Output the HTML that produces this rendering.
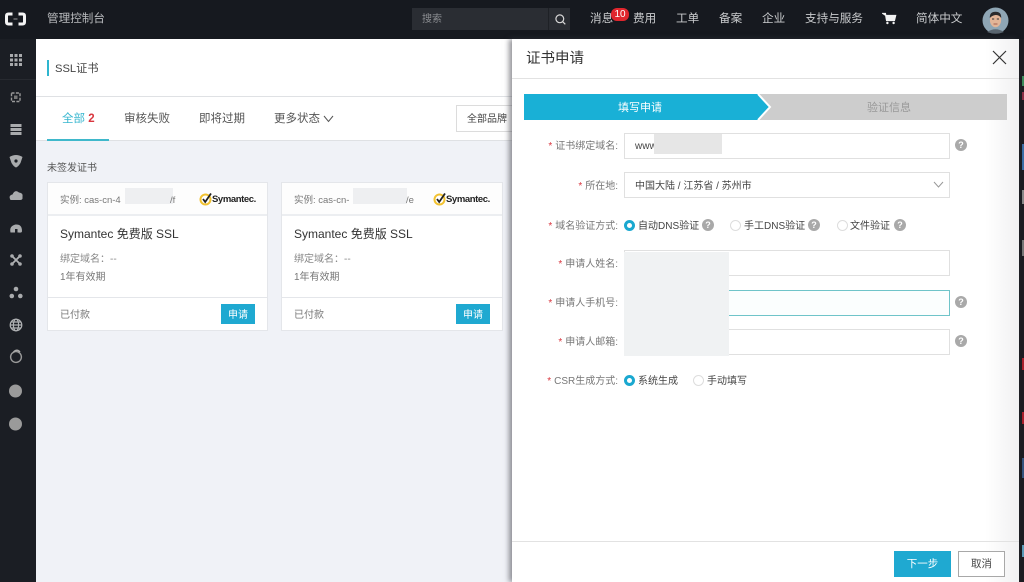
<!DOCTYPE html>
<html lang="zh"><head><meta charset="utf-8"><title>证书申请</title>
<style>
*{box-sizing:border-box}
html,body{margin:0;padding:0;width:1024px;height:582px;overflow:hidden;background:#f0f2f7}
body{font-family:"Liberation Sans","Noto Sans CJK SC",sans-serif;position:relative;color:#333;filter:blur(.3px)}
.a{position:absolute;white-space:nowrap}
.nav{top:11px;font-size:11.6px;line-height:16px;color:#c9cbcd}
.card{position:absolute;top:182px;width:221px;height:149px;background:#fff;border:1px solid #e4e6ea}
.card .h{position:absolute;left:0;top:0;right:0;height:33px;border-bottom:2px solid #eceef1;background:#fdfdfd}
.lab{position:absolute;font-size:10px;color:#777;line-height:14px;white-space:nowrap;right:406px}
.lab b{color:#d9363e;font-weight:400;margin-right:3px}
.inp{position:absolute;left:624px;width:326px;height:26px;background:#fff;border:1px solid #e0e0e0}
.q{position:absolute;width:12px;height:12px;border-radius:50%;background:#a9a9a9;color:#fff;font-size:9px;line-height:12px;text-align:center;font-weight:700}
.r{position:absolute;width:11px;height:11px;border-radius:50%;border:1px solid #ddd;background:#fff}
.r.on{border:3px solid #1aa8d0}
.rt{position:absolute;font-size:10px;line-height:14px;color:#444;white-space:nowrap}
</style></head><body>
<!-- top bar -->
<div class="a" style="left:0;top:0;width:1024px;height:39px;background:#16191f"></div>
<svg class="a" style="left:5px;top:12px" width="21" height="14" viewBox="0 0 21 14"><path d="M7.500 2H3.500Q1.500 2 1.500 4V10Q1.500 12 3.500 12H7.500M13.500 2H17.500Q19.500 2 19.500 4V10Q19.500 12 17.500 12H13.500" fill="none" stroke="#f4f4f4" stroke-width="3"/><path d="M8.500 7H12.500" stroke="#999" stroke-width="1"/></svg>
<div class="a" style="left:47px;top:11px;font-size:11.600px;line-height:16px;color:#b9bbbe">管理控制台</div>
<div class="a" style="left:412px;top:8px;width:158px;height:22px;background:#2a2d33"></div>
<div class="a" style="left:548px;top:8px;width:1px;height:22px;background:#1e2126"></div>
<div class="a" style="left:422px;top:13px;font-size:10px;line-height:13px;color:#8a8c90">搜索</div>
<svg class="a" style="left:554px;top:13px" width="13" height="13" viewBox="0 0 13 13"><circle cx="5.800" cy="5.800" r="3.900" fill="none" stroke="#d8d8d8" stroke-width="1.200"/><path d="M8.700 8.700L11.300 11.300" stroke="#d8d8d8" stroke-width="1.200"/></svg>
<div class="a nav" style="left:590px">消息</div>
<div class="a" style="left:611px;top:8px;width:18px;height:13px;border-radius:6px;background:#e0262d;color:#fff;font-size:10px;line-height:13px;text-align:center">10</div>
<div class="a nav" style="left:633px">费用</div>
<div class="a nav" style="left:676px">工单</div>
<div class="a nav" style="left:719px">备案</div>
<div class="a nav" style="left:762px">企业</div>
<div class="a nav" style="left:805px">支持与服务</div>
<svg class="a" style="left:882px;top:12px" width="15" height="13" viewBox="0 0 15 13"><path d="M1 1.500H3.400L4.600 8.500H12.400L13.600 3.500H3.800Z" fill="#f2f2f2" stroke="#f2f2f2" stroke-width="1.300"/><circle cx="5.400" cy="11" r="1.200" fill="#f2f2f2"/><circle cx="11.600" cy="11" r="1.200" fill="#f2f2f2"/></svg>
<div class="a nav" style="left:916px">简体中文</div>
<svg class="a" style="left:982px;top:7px" width="27" height="27" viewBox="0 0 27 27"><circle cx="13.500" cy="13.500" r="13" fill="#8fa6b5"/><ellipse cx="13.500" cy="13" rx="5.600" ry="7.200" fill="#e3b598"/><path d="M7.800 11Q7.500 4.800 13.500 4.800T19.200 11Q17 7.600 13.500 8T7.800 11Z" fill="#2b2a2c"/><path d="M10 12H12.200M14.800 12H17" stroke="#333" stroke-width="1"/><path d="M11.500 17H15.500" stroke="#a5604e" stroke-width="1"/><path d="M5 25Q13.500 19.500 22 25Q13.500 28.500 5 25Z" fill="#5b6670"/></svg>

<!-- sidebar -->
<div class="a" style="left:0;top:39px;width:36px;height:543px;background:#1b1e24"></div>
<div class="a" style="left:0;top:79px;width:36px;height:1px;background:#272a30"></div>
<svg class="a" style="left:0;top:39px" width="36" height="400" viewBox="0 0 36 400" fill="#a9abad">
<g><rect x="10" y="15" width="3" height="3"/><rect x="14.500" y="15" width="3" height="3"/><rect x="19" y="15" width="3" height="3"/><rect x="10" y="19.500" width="3" height="3"/><rect x="14.500" y="19.500" width="3" height="3"/><rect x="19" y="19.500" width="3" height="3"/><rect x="10" y="24" width="3" height="3"/><rect x="14.500" y="24" width="3" height="3"/><rect x="19" y="24" width="3" height="3"/></g>
<path d="M11.500 54H20V62.500H11.500Z" fill="none" stroke="#999" stroke-width="1.400" stroke-dasharray="3 1.400"/><rect x="14" y="56.500" width="3.500" height="3.500" fill="#777"/>
<rect x="10.500" y="85" width="11" height="3"/><rect x="10.500" y="89" width="11" height="3"/><rect x="10.500" y="93" width="11" height="3"/>
<path d="M9.500 118Q16 114 22.500 118L20.500 124Q18 128 16 128.500Q14 128 11.500 124Z"/><circle cx="16" cy="122" r="1.600" fill="#1b1e24"/>
<path d="M10.500 161Q8 156.500 12.500 155.500Q15 150 19 153.500Q23.500 154 22.500 158Q23 161 20 161Z"/>
<path d="M10.500 193.500Q9 187 15.500 185.500Q22 185 22 192Q22 194 19 193.500H17.500V190H15V193.500Z"/>
<g stroke="#b0b2b4" stroke-width="1.800"><path d="M12 217L20 225M20 217L12 225"/></g><circle cx="12" cy="217" r="1.800"/><circle cx="20" cy="217" r="1.800"/><circle cx="12" cy="225" r="1.800"/><circle cx="20" cy="225" r="1.800"/>
<circle cx="16" cy="250" r="2.300"/><circle cx="11.800" cy="257" r="2.300"/><circle cx="20.300" cy="257" r="2.300"/>
<g fill="none" stroke="#b0b2b4" stroke-width="1.200"><circle cx="16" cy="286" r="5.800"/><ellipse cx="16" cy="286" rx="2.600" ry="5.800"/><path d="M10.200 286H21.800M11 283H21M11 289H21"/></g>
<path d="M11 316A5 5 0 1 0 21 320A5 5 0 1 0 11 316Z" fill="none" stroke="#999" stroke-width="1.400"/><path d="M13.500 313Q17 309.500 20 313" fill="none" stroke="#aaa" stroke-width="1.400"/>
<circle cx="15.500" cy="352" r="6.500" fill="#9a9a9a"/><circle cx="15.500" cy="385" r="6.500" fill="#9a9a9a"/>
</svg>

<!-- content -->
<div class="a" style="left:36px;top:39px;width:476px;height:58px;background:#fff;border-bottom:1px solid #dfe1e4"></div>
<div class="a" style="left:47px;top:60px;width:2px;height:16px;background:#2eb6cf"></div>
<div class="a" style="left:55px;top:62px;font-size:11.200px;line-height:14px;color:#444">SSL证书</div>
<div class="a" style="left:36px;top:97px;width:476px;height:44px;background:#fff;border-bottom:1px solid #dfe1e4"></div>
<div class="a" style="left:47px;top:139px;width:62px;height:2px;background:#3fb8cb"></div>
<div class="a" style="left:62px;top:112px;font-size:11.500px;line-height:15px;color:#36b6cf">全部 <span style="color:#d9363e;font-weight:700">2</span></div>
<div class="a" style="left:124px;top:112px;font-size:11.500px;line-height:15px;color:#555">审核失败</div>
<div class="a" style="left:199px;top:112px;font-size:11.500px;line-height:15px;color:#555">即将过期</div>
<div class="a" style="left:274px;top:112px;font-size:11.500px;line-height:15px;color:#555">更多状态</div>
<svg class="a" style="left:323px;top:115px" width="11" height="8" viewBox="0 0 11 8"><path d="M1 1L5.500 6.500L10 1" fill="none" stroke="#555" stroke-width="1"/></svg>
<div class="a" style="left:456px;top:105px;width:60px;height:27px;border:1px solid #dcdcdc;background:#fff;font-size:10px;line-height:27px;padding-left:10px;color:#444">全部品牌</div>
<div class="a" style="left:47px;top:162px;font-size:10px;line-height:14px;color:#555">未签发证书</div>

<div class="card" style="left:47px">
<div class="h"></div>
<div class="a" style="left:12px;top:11px;font-size:9.500px;line-height:14px;color:#777">实例: cas-cn-4</div>
<div class="a" style="left:77px;top:5px;width:48px;height:16px;background:#eeeff1"></div>
<div class="a" style="left:122px;top:11px;font-size:9.500px;line-height:14px;color:#777">/f</div>
<svg class="a" style="left:151px;top:9px" width="14" height="14" viewBox="0 0 14 14"><circle cx="6.500" cy="7.500" r="5" fill="#fff" stroke="#f2c230" stroke-width="2"/><path d="M4 7L6.200 10L12 1.500" fill="none" stroke="#222" stroke-width="1.800"/></svg>
<div class="a" style="left:164px;top:10px;font-size:9.500px;line-height:13px;font-weight:700;color:#222;letter-spacing:-.4px">Symantec.</div>
<div class="a" style="left:12px;top:43px;font-size:12px;line-height:16px;color:#333">Symantec 免费版 SSL</div>
<div class="a" style="left:12px;top:70px;font-size:10px;line-height:14px;color:#888">绑定域名：--</div>
<div class="a" style="left:12px;top:88px;font-size:10px;line-height:14px;color:#777">1年有效期</div>
<div class="a" style="left:0;top:114px;width:219px;height:1px;background:#e4e6ea"></div>
<div class="a" style="left:12px;top:126px;font-size:10px;line-height:14px;color:#777">已付款</div>
<div class="a" style="left:173px;top:121px;width:34px;height:20px;background:#1fa9d1;color:#fff;font-size:10px;line-height:23px;text-align:center">申请</div>
</div>

<div class="card" style="left:281px;width:222px">
<div class="h"></div>
<div class="a" style="left:12px;top:11px;font-size:9.500px;line-height:14px;color:#777">实例: cas-cn-</div>
<div class="a" style="left:71px;top:5px;width:54px;height:16px;background:#eeeff1"></div>
<div class="a" style="left:124px;top:11px;font-size:9.500px;line-height:14px;color:#777">/e</div>
<svg class="a" style="left:151px;top:9px" width="14" height="14" viewBox="0 0 14 14"><circle cx="6.500" cy="7.500" r="5" fill="#fff" stroke="#f2c230" stroke-width="2"/><path d="M4 7L6.200 10L12 1.500" fill="none" stroke="#222" stroke-width="1.800"/></svg>
<div class="a" style="left:164px;top:10px;font-size:9.500px;line-height:13px;font-weight:700;color:#222;letter-spacing:-.4px">Symantec.</div>
<div class="a" style="left:12px;top:43px;font-size:12px;line-height:16px;color:#333">Symantec 免费版 SSL</div>
<div class="a" style="left:12px;top:70px;font-size:10px;line-height:14px;color:#888">绑定域名：--</div>
<div class="a" style="left:12px;top:88px;font-size:10px;line-height:14px;color:#777">1年有效期</div>
<div class="a" style="left:0;top:114px;width:220px;height:1px;background:#e4e6ea"></div>
<div class="a" style="left:12px;top:126px;font-size:10px;line-height:14px;color:#777">已付款</div>
<div class="a" style="left:174px;top:121px;width:34px;height:20px;background:#1fa9d1;color:#fff;font-size:10px;line-height:23px;text-align:center">申请</div>
</div>

<!-- right edge strip -->
<div class="a" style="left:1019px;top:39px;width:5px;height:543px;background:#1c1d22"></div>
<div class="a" style="left:1022px;top:76px;width:2px;height:10px;background:#3c8a5a"></div>
<div class="a" style="left:1022px;top:92px;width:2px;height:8px;background:#8a2f45"></div>
<div class="a" style="left:1022px;top:144px;width:2px;height:26px;background:#3b6ea6"></div>
<div class="a" style="left:1022px;top:190px;width:2px;height:14px;background:#888"></div>
<div class="a" style="left:1022px;top:240px;width:2px;height:16px;background:#777"></div>
<div class="a" style="left:1022px;top:358px;width:2px;height:12px;background:#a8202c"></div>
<div class="a" style="left:1022px;top:412px;width:2px;height:12px;background:#a8202c"></div>
<div class="a" style="left:1022px;top:458px;width:2px;height:20px;background:#35557f"></div>
<div class="a" style="left:1022px;top:545px;width:2px;height:12px;background:#5a9bb8"></div>

<!-- slide panel -->
<div class="a" style="left:512px;top:39px;width:507px;height:543px;background:#fff;box-shadow:-3px 0 5px rgba(60,60,70,.55)"></div>
<div class="a" style="left:985px;top:39px;width:34px;height:543px;background:linear-gradient(90deg,#fff,#f1f1f2)"></div>
<div class="a" style="left:526px;top:49px;font-size:14.500px;line-height:20px;color:#333">证书申请</div>
<svg class="a" style="left:992px;top:50px" width="15" height="15" viewBox="0 0 15 15"><path d="M1 1L14 14M14 1L1 14" stroke="#333" stroke-width="1.200"/></svg>
<div class="a" style="left:512px;top:78px;width:507px;height:1px;background:#e2e2e2"></div>

<div class="a" style="left:524px;top:94px;width:483px;height:26px;background:#cdcdcd"></div>
<svg class="a" style="left:524px;top:94px" width="250" height="26" viewBox="0 0 250 26"><path d="M0 0H234L246 13L234 26H0Z" fill="#19b0d6"/><path d="M234 0L246 13L234 26" fill="none" stroke="#fff" stroke-width="2"/></svg>
<div class="a" style="left:618px;top:100px;font-size:11px;line-height:16px;color:#fff">填写申请</div>
<div class="a" style="left:867px;top:100px;font-size:11px;line-height:16px;color:#999">验证信息</div>

<div class="lab" style="top:140px"><b>*</b>证书绑定域名:</div>
<div class="inp" style="top:133px"></div>
<div class="a" style="left:635px;top:140px;font-size:10px;line-height:14px;color:#444">www</div>
<div class="a" style="left:654px;top:134px;width:68px;height:20px;background:#e6e6e6"></div>
<div class="q" style="left:955px;top:139px">?</div>

<div class="lab" style="top:180px"><b>*</b>所在地:</div>
<div class="inp" style="top:172px"></div>
<div class="a" style="left:635px;top:180px;font-size:10px;line-height:14px;color:#444">中国大陆 / 江苏省 / 苏州市</div>
<svg class="a" style="left:933px;top:181px" width="11" height="7" viewBox="0 0 11 7"><path d="M1 1L5.500 6L10 1" fill="none" stroke="#999" stroke-width="1"/></svg>

<div class="lab" style="top:220px"><b>*</b>域名验证方式:</div>
<div class="r on" style="left:624px;top:220px"></div><div class="rt" style="left:638px;top:220px">自动DNS验证</div><div class="q" style="left:702px;top:219px">?</div>
<div class="r" style="left:730px;top:220px"></div><div class="rt" style="left:744px;top:220px">手工DNS验证</div><div class="q" style="left:808px;top:219px">?</div>
<div class="r" style="left:837px;top:220px"></div><div class="rt" style="left:850px;top:220px">文件验证</div><div class="q" style="left:894px;top:219px">?</div>

<div class="lab" style="top:258px"><b>*</b>申请人姓名:</div>
<div class="inp" style="top:250px"></div>
<div class="lab" style="top:297px"><b>*</b>申请人手机号:</div>
<div class="inp" style="top:290px;border-color:#6fc4c9;background:#fbfefe"></div>
<div class="q" style="left:955px;top:296px">?</div>
<div class="lab" style="top:336px"><b>*</b>申请人邮箱:</div>
<div class="inp" style="top:329px"></div>
<div class="q" style="left:955px;top:335px">?</div>
<div class="a" style="left:624px;top:252px;width:105px;height:104px;background:#f0f2f3"></div>

<div class="lab" style="top:375px"><b>*</b>CSR生成方式:</div>
<div class="r on" style="left:624px;top:375px"></div><div class="rt" style="left:638px;top:375px">系统生成</div>
<div class="r" style="left:693px;top:375px"></div><div class="rt" style="left:707px;top:375px">手动填写</div>

<div class="a" style="left:512px;top:541px;width:507px;height:1px;background:#e2e2e2"></div>
<div class="a" style="left:894px;top:551px;width:57px;height:26px;background:#1fa9d1;color:#fff;font-size:10.500px;line-height:26px;text-align:center">下一步</div>
<div class="a" style="left:958px;top:551px;width:47px;height:26px;background:#fff;border:1px solid #a8a8a8;color:#444;font-size:10.500px;line-height:24px;text-align:center">取消</div>
</body></html>
